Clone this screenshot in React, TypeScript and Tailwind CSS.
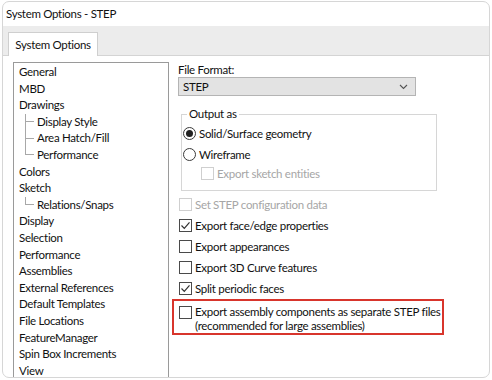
import React from "react";

const font = "font-['Lato',sans-serif] tracking-[-0.3px]";

type Item = { label: string; child?: boolean; last?: boolean };
const items: Item[] = [
  { label: "General" },
  { label: "MBD" },
  { label: "Drawings" },
  { label: "Display Style", child: true },
  { label: "Area Hatch/Fill", child: true },
  { label: "Performance", child: true, last: true },
  { label: "Colors" },
  { label: "Sketch" },
  { label: "Relations/Snaps", child: true, last: true },
  { label: "Display" },
  { label: "Selection" },
  { label: "Performance" },
  { label: "Assemblies" },
  { label: "External References" },
  { label: "Default Templates" },
  { label: "File Locations" },
  { label: "FeatureManager" },
  { label: "Spin Box Increments" },
  { label: "View" },
];

function Check({ checked, disabled }: { checked?: boolean; disabled?: boolean }) {
  return (
    <span
      className={
        "w-[13px] h-[13px] shrink-0 flex items-center justify-center border bg-white " +
        (disabled ? "border-[#cfcfcf]" : "border-[#4a4a4a]")
      }
    >
      {checked && (
        <svg width="11" height="11" viewBox="0 0 11 11">
          <path d="M1.5 5.5 L4.3 8.3 L9.5 2.3" fill="none" stroke="#333" strokeWidth="1.2" />
        </svg>
      )}
    </span>
  );
}

function Radio({ checked }: { checked?: boolean }) {
  return (
    <span className="w-[13px] h-[13px] shrink-0 rounded-full border border-[#3a3a3a] bg-white flex items-center justify-center">
      {checked && <span className="w-[7px] h-[7px] rounded-full bg-[#222]" />}
    </span>
  );
}

function Row({ children, checked, disabled }: { children: React.ReactNode; checked?: boolean; disabled?: boolean }) {
  return (
    <div className="h-[21px] flex items-center gap-[3px] pl-[1px]">
      <Check checked={checked} disabled={disabled} />
      <span className={disabled ? "text-[#a6a6a6]" : "text-[#111]"}>{children}</span>
    </div>
  );
}

export default function App() {
  return (
    <div className={"w-[492px] h-[380px] bg-white overflow-hidden pt-[1px] pl-[2px] " + font}>
      <div className="w-[488px] h-[377px] rounded-[7px] border border-[#d6d6d6] overflow-hidden flex flex-col bg-white text-[11.5px] text-[#111]">
        <div className="h-[24px] shrink-0 flex items-center pl-[3px] text-[11.5px]">
          System Options - STEP
        </div>
        <div className="h-[30px] shrink-0 bg-[#ececec] border-b border-[#d4d4d4] flex items-end pl-[5px]">
          <div className="w-[90px] h-[24px] -mb-px bg-white border border-b-0 border-[#cfcfcf] flex items-center justify-center">
            System Options
          </div>
        </div>
        <div className="flex-1 flex pl-[10px] pt-[6px] min-h-0">
          <div className="w-[156px] shrink-0 h-[330px] border border-[#9a9a9a] pt-[1px] pl-[5px] leading-[16.6px]">
            {items.map((it, i) =>
              it.child ? (
                <div key={i} className="flex h-[16.6px]">
                  <div className="w-[6px] shrink-0" />
                  <div className="w-[12px] shrink-0 flex flex-col">
                    <span className="h-[8.5px] w-[9px] border-l border-b border-[#a8a8a8]" />
                    {!it.last && <span className="flex-1 border-l border-[#a8a8a8]" />}
                  </div>
                  <span>{it.label}</span>
                </div>
              ) : (
                <div key={i} className="h-[16.6px]">
                  {it.label}
                </div>
              )
            )}
          </div>
          <div className="ml-[9px] w-[270px] flex flex-col">
            <div className="h-[15px] leading-[15px]">File Format:</div>
            <div className="w-[238px] h-[19px] bg-[#e3e3e3] border border-[#b4b4b4] flex items-center justify-between pl-[4px] pr-[7px]">
              <span>STEP</span>
              <svg width="9" height="6" viewBox="0 0 9 6">
                <path d="M1 1 L4.5 4.5 L8 1" fill="none" stroke="#555" strokeWidth="1.1" />
              </svg>
            </div>
            <fieldset className="ml-[3px] mt-[11px] w-[256px] h-[84px] border border-[#d6d6d6] pl-[1px]">
              <legend className="ml-[4px] px-[2px] leading-[14px]">Output as</legend>
              <div className="h-[21px] flex items-center gap-[3px] mt-[2px]">
                <Radio checked />
                <span>Solid/Surface geometry</span>
              </div>
              <div className="h-[21px] flex items-center gap-[3px]">
                <Radio />
                <span>Wireframe</span>
              </div>
              <div className="h-[17px] flex items-center gap-[3px] pl-[18px]">
                <Check disabled />
                <span className="text-[#a6a6a6]">Export sketch entities</span>
              </div>
            </fieldset>
            <div className="mt-[3px]">
              <Row disabled>Set STEP configuration data</Row>
              <Row checked>Export face/edge properties</Row>
              <Row>Export appearances</Row>
              <Row>Export 3D Curve features</Row>
              <Row checked>Split periodic faces</Row>
            </div>
            <div className="-ml-[6px] w-[272px] h-[36px] border-2 border-[#d8352c] flex items-start gap-[3px] pl-[5px] pt-[4px] leading-[14px]">
              <div className="pt-[0.5px]">
                <Check />
              </div>
              <div className="whitespace-nowrap">
                Export assembly components as separate STEP files
                <br />
                (recommended for large assemblies)
              </div>
            </div>
          </div>
        </div>
      </div>
    </div>
  );
}
